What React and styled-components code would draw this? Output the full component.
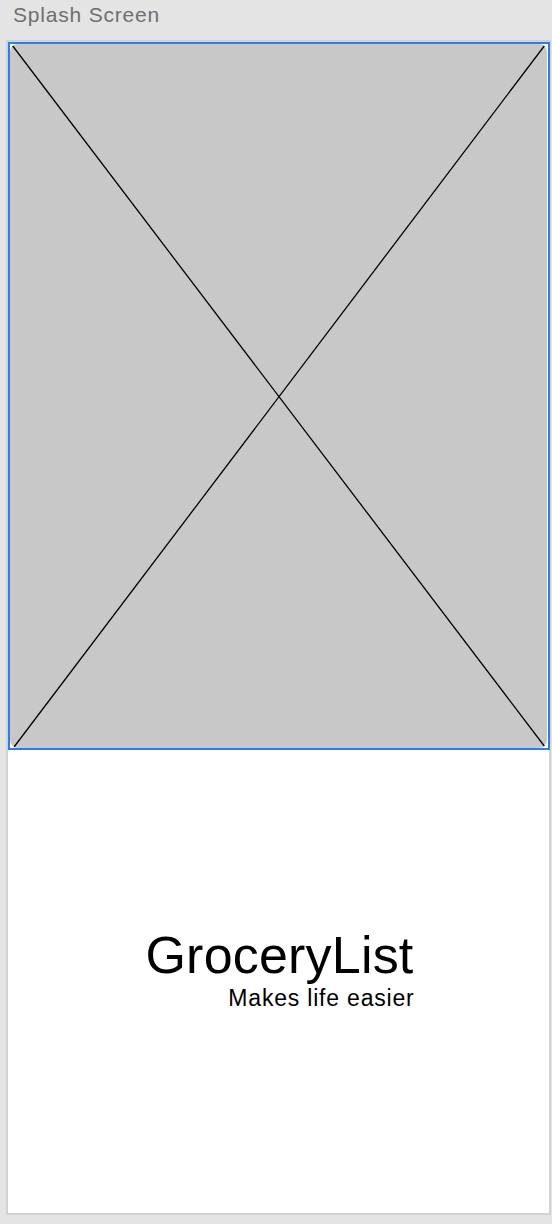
import React from "react";
import styled, { createGlobalStyle } from "styled-components";

const GlobalStyle = createGlobalStyle`
  html, body {
    margin: 0;
    padding: 0;
    background: #e4e4e4;
    font-family: "Liberation Sans", Arial, sans-serif;
  }
`;

const Page = styled.div`
  width: 552px;
  height: 1224px;
  background: #e4e4e4;
  display: flex;
  flex-direction: column;
`;

const Title = styled.div`
  height: 40px;
  padding-left: 13px;
  box-sizing: border-box;
  font-size: 21px;
  line-height: 30px;
  color: #6f6f6f;
  letter-spacing: 0.8px;
`;

const Artboard = styled.div`
  margin-left: 6px;
  width: 545px;
  height: 1175px;
  box-sizing: border-box;
  border: 2px solid #d2d2d2;
  background: #fff;
  display: flex;
  flex-direction: column;
`;

const Selected = styled.div`
  height: 708px;
  margin-right: -1px;
  box-sizing: border-box;
  border: 2px solid #2d7fe8;
  padding: 0 1px 0 0;
  display: flex;
`;

const Placeholder = styled.div`
  flex: 1;
  background: #c8c8c8;
  border-radius: 8px;
  overflow: hidden;
  position: relative;
`;

const Cross = styled.svg`
  position: absolute;
  inset: 0;
  width: 100%;
  height: 100%;
`;

const Body = styled.div`
  flex: 1;
  display: flex;
  align-items: center;
  justify-content: center;
  padding-bottom: 25px;
`;

const Brand = styled.div`
  display: flex;
  flex-direction: column;
  align-items: flex-end;
  margin-left: 2px;
`;

const AppName = styled.div`
  font-size: 52px;
  line-height: 54px;
  color: #000;
  letter-spacing: 0.2px;
`;

const Tagline = styled.div`
  font-size: 23px;
  line-height: 24px;
  color: #000;
  margin-top: 4px;
  letter-spacing: 0.8px;
  margin-right: -1px;
`;

export default function App() {
  return (
    <>
      <GlobalStyle />
      <Page>
        <Title>Splash Screen</Title>
        <Artboard>
          <Selected>
            <Placeholder>
              <Cross viewBox="0 0 537 703" preserveAspectRatio="none">
                <line x1="2" y1="1" x2="535" y2="702" stroke="#000" strokeWidth="1.3" />
                <line x1="535" y1="1" x2="4" y2="702" stroke="#000" strokeWidth="1.3" />
              </Cross>
            </Placeholder>
          </Selected>
          <Body>
            <Brand>
              <AppName>GroceryList</AppName>
              <Tagline>Makes life easier</Tagline>
            </Brand>
          </Body>
        </Artboard>
      </Page>
    </>
  );
}
